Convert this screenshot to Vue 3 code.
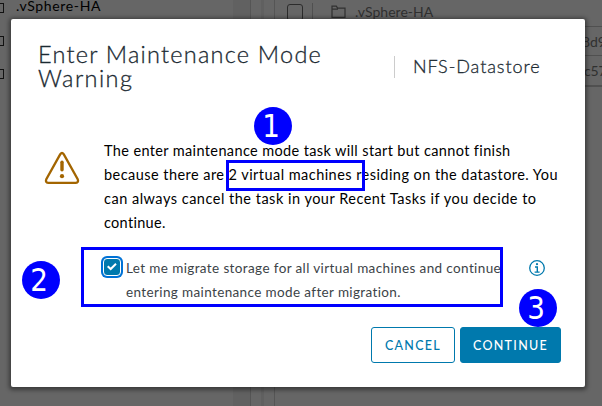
<script setup>
const message = [
  { text: 'The enter maintenance mode task will start but cannot finish', cls: 'm1' },
  { text: 'because there are 2 virtual machines residing on the datastore. You', cls: 'm2' },
  { text: 'can always cancel the task in your Recent Tasks if you decide to', cls: 'm3' },
  { text: 'continue.', cls: 'm4' },
]
</script>

<template>
  <div class="screen">
    <div class="page">
      <aside class="tree">
        <div class="node"><i class="box"></i><span class="node-name">.vSphere-HA</span></div>
        <div class="node"><i class="box"></i></div>
        <div class="node"><i class="box"></i></div>
      </aside>
      <div class="scroll"></div>
      <div class="gutter"><i></i></div>
      <main class="grid">
        <div class="row first">
          <i class="check"></i>
          <i class="sep"></i>
          <svg class="folder" width="15" height="14" viewBox="0 0 15 14" fill="none" stroke="#303030" stroke-width="1.2">
            <path d="M1 12.4V1.2h4.3l1.3 2H14v9.2H1z M1 4.2h6" />
          </svg>
          <span class="file">.vSphere-HA</span>
        </div>
        <div class="row end">8d9</div>
        <div class="row end last">c57</div>
      </main>
    </div>

    <section class="dialog">
      <header class="head">
        <h1><span class="t1">Enter Maintenance Mode</span><span class="t2">Warning</span></h1>
        <div class="subject"><span>NFS-Datastore</span></div>
      </header>
      <div class="body">
        <svg class="warn" width="36" height="34" viewBox="0 0 36 34" fill="none" stroke="#a36500">
          <path d="M16.3 3.1 2.3 28.2Q1 31.4 4.2 31.8H31.8Q35 31.4 33.7 28.2L19.7 3.1Q18 .9 16.3 3.1Z" stroke-width="2.3" />
          <path d="M18 11.2v7.6" stroke-width="3.4" stroke-linecap="round" />
          <circle cx="18" cy="25.2" r="2.1" fill="#a36500" stroke="none" />
        </svg>
        <p class="message">
          <span v-for="m in message" :key="m.cls" :class="m.cls">{{ m.text }}</span>
        </p>
      </div>
      <div class="option">
        <span class="tick">
          <svg width="16" height="16" viewBox="0 0 16 16" fill="none" stroke="#fff" stroke-width="2">
            <path d="M3.7 7.2 6.7 10 12 4.8" />
          </svg>
        </span>
        <label><span class="l1">Let me migrate storage for all virtual machines and continue</span><span class="l2">entering maintenance mode after migration.</span></label>
        <svg class="info" width="16" height="16" viewBox="0 0 16 16" fill="none" stroke="#0079ad" stroke-width="1.3">
          <circle cx="8" cy="8" r="7.3" />
          <path d="M6 7h2.3v5M5.6 12.1h5" stroke-width="1.4" />
          <circle cx="8" cy="4.2" r="1.1" fill="#0079ad" stroke="none" />
        </svg>
      </div>
      <footer class="actions">
        <button class="btn cancel"><span>CANCEL</span></button>
        <button class="btn go"><span>CONTINUE</span></button>
      </footer>
    </section>

    <div class="frame frame-a"></div>
    <div class="frame frame-b"></div>
    <div class="badge b1"><span>1</span></div>
    <div class="badge b2"><span>2</span></div>
    <div class="badge b3"><span>3</span></div>
  </div>
</template>

<style>
body { margin: 0; }
</style>

<style scoped>
* { box-sizing: border-box; }
.screen { position: relative; width: 602px; height: 406px; overflow: hidden; background: #666; font-family: Lato, "Liberation Sans", sans-serif; }
.page { display: flex; height: 100%; }
.tree { width: 233px; padding-top: 3px; }
.node { display: flex; height: 33px; }
.box { width: 4px; height: 10px; border: 1px solid #111; border-left: 0; }
.node-name { height: 12px; margin: -3px 0 0 12px; font-size: 14px; line-height: 12px; color: #000; letter-spacing: .65px; white-space: nowrap; }
.scroll { width: 18px; background: #616161; border-right: 1px solid #555; }
.gutter { display: flex; justify-content: center; width: 24px; border-right: 1px solid #555; }
.gutter i { width: 3px; background: #606060; }
.grid { flex: 1; min-width: 0; color: #303030; font-size: 14px; }
.row { display: flex; height: 29px; border-bottom: 1px solid #505050; }
.row.first { height: 27px; padding: 4px 0 0 12px; }
.check { width: 16px; height: 17px; border: 1px solid #2c2c2c; border-radius: 3px; }
.sep { width: 1px; height: 16px; margin: -1px 18px 0 9px; background: #505050; }
.folder { margin-top: 1px; }
.file { margin: -1px 0 0 9px; line-height: 18px; letter-spacing: .02px; white-space: nowrap; }
.row.end { align-items: center; padding-left: 307px; letter-spacing: -.1px; }
.row.last { height: 31px; padding-left: 309px; border-bottom: 2px solid #505050; }

.dialog { position: absolute; left: 11px; top: 19px; width: 574px; height: 368px; background: #fff; border-radius: 2px; box-shadow: 0 1px 4px 2px rgba(0, 0, 0, .42); display: flex; flex-direction: column; }
.head { display: flex; height: 111px; padding: 23px 0 0 27px; color: #1b2a32; }
h1 { width: 356px; margin: 0; font-size: 23.5px; font-weight: 300; line-height: 24px; -webkit-text-stroke: .3px currentColor; }
h1 span, .message span, label span { display: block; white-space: nowrap; width: max-content; }
.t1 { letter-spacing: 1.23px; }
.t2 { letter-spacing: 1.4px; }
.subject { height: 22px; margin-top: 14px; padding-left: 18px; border-left: 1px solid #ccc; font-size: 18px; font-weight: 300; line-height: 21px; letter-spacing: .92px; white-space: nowrap; -webkit-text-stroke: .3px currentColor; }
.body { display: flex; height: 113px; padding: 9px 0 0 33px; }
.warn { margin-top: 12px; }
.message { margin: 0 0 0 24px; font-size: 14.5px; line-height: 24px; color: #000; letter-spacing: .5px; }
.m1 { letter-spacing: .37px; }
.m2 { letter-spacing: .45px; }
.m4 { letter-spacing: .3px; }
.option { display: flex; height: 84px; padding: 13px 0 0 92px; }
.tick { display: flex; align-items: center; justify-content: center; width: 18px; height: 18px; margin-top: 2px; border: 1px solid #fff; border-radius: 4px; background: #0079ad; box-shadow: 0 0 0 2px #0072d6; }
label { width: 403px; margin: -.5px 0 0 5px; font-size: 13.5px; line-height: 24px; color: #3c4347; letter-spacing: .38px; }
.l2 { letter-spacing: .37px; }
.info { margin-top: 4px; }
.actions { display: flex; gap: 5px; justify-content: flex-end; padding-right: 24px; }
.btn { display: flex; align-items: center; justify-content: center; height: 36px; padding: 1px 0 0; border: 1px solid #0079ad; border-radius: 3px; font: 500 12.5px Lato, sans-serif; letter-spacing: 1.3px; color: #0079ad; background: #fff; }
.cancel { width: 84px; }
.go { width: 101px; background: #0079ad; color: #fff; }

.frame { position: absolute; border: 3px solid #0000fe; }
.frame-a { left: 226px; top: 160px; width: 139px; height: 31px; }
.frame-b { left: 81px; top: 247px; width: 422px; height: 60px; }
.badge { position: absolute; width: 38px; height: 38px; padding-right: 3px; border-radius: 50%; background: #0000fe; color: #fff; font-family: "DejaVu Sans", sans-serif; font-size: 32px; line-height: 39px; text-align: center; }
.badge span { display: inline-block; transform: scaleX(.87); }
.b1 { left: 254px; top: 107px; }
.b2 { left: 22px; top: 261px; }
.b3 { left: 519px; top: 289px; }
</style>
